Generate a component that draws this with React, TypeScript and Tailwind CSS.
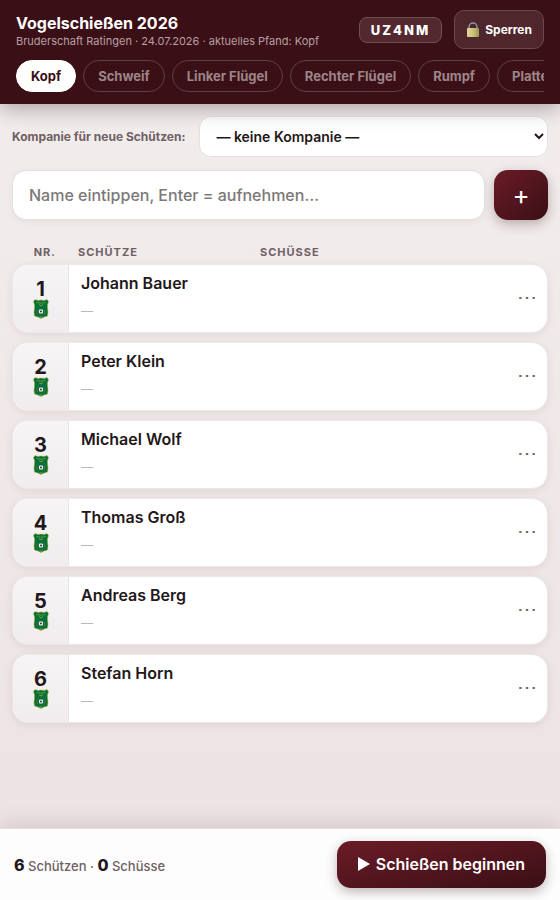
import { useState } from 'react';
import type { FormEvent } from 'react';

interface Shooter {
  id: number;
  name: string;
}

const targets = ['Kopf', 'Schweif', 'Linker Flügel', 'Rechter Flügel', 'Rumpf', 'Platte'];

const initialShooters: Shooter[] = [
  { id: 1, name: 'Johann Bauer' },
  { id: 2, name: 'Peter Klein' },
  { id: 3, name: 'Michael Wolf' },
  { id: 4, name: 'Thomas Groß' },
  { id: 5, name: 'Andreas Berg' },
  { id: 6, name: 'Stefan Horn' },
];

function Crest() {
  return (
    <svg viewBox="0 0 32 40" className="w-4 h-5" aria-hidden="true">
      <path
        d="M4 1 Q10 4 16 2 Q22 4 28 1 L31 5 Q28 11 29 18 Q31 27 29 34 Q22 35 16 39 Q10 35 3 34 Q1 27 3 18 Q4 11 1 5 Z"
        fill="#07703c"
        stroke="#a3ab1f"
        strokeWidth="1"
      />
      <path d="M7 7 Q16 10 25 7" fill="none" stroke="#5f9a2c" strokeWidth="2" />
      <path d="M12 11 L16 14 L20 11" fill="none" stroke="#7fa52a" strokeWidth="2" />
      <path d="M9 21 Q6 26 10 31 M23 21 Q26 26 22 31" fill="none" stroke="#5e6a2c" strokeWidth="2" />
      <rect x="12" y="21" width="8" height="8" rx="2" fill="#f0f3ef" />
      <circle cx="16" cy="25" r="2" fill="#26302b" />
      <path d="M14 35 L16 37 L18 35" fill="none" stroke="#d8c91c" strokeWidth="2" />
    </svg>
  );
}

function LockIcon() {
  return (
    <svg viewBox="0 0 28 32" className="w-[14px] h-4" aria-hidden="true">
      <defs>
        <linearGradient id="lock-body" x1="0" x2="1">
          <stop offset="0" stopColor="#e0da96" />
          <stop offset="0.5" stopColor="#c9c27a" />
          <stop offset="1" stopColor="#9c9455" />
        </linearGradient>
      </defs>
      <path d="M6 16 V10 a8 8 0 0 1 16 0 V16" fill="none" stroke="#8598a5" strokeWidth="3" />
      <rect x="2" y="12" width="24" height="18" rx="2" fill="url(#lock-body)" />
    </svg>
  );
}

function ShooterRow({ shooter, position }: { shooter: Shooter; position: number }) {
  return (
    <tr className="flex overflow-hidden rounded-2xl border border-[#ece8e9] bg-white shadow-[0_2px_8px_rgba(60,15,20,0.08)]">
      <td className="flex w-14 shrink-0 flex-col items-center justify-center border-r border-[#e9e4e5] bg-linear-to-b from-[#f7f4f5] to-[#f1edee]">
        <span className="text-xl leading-5 font-bold">{position}</span>
        <Crest />
      </td>
      <td className="min-w-0 flex-1 px-3 pt-2 pb-3">
        <div className="truncate text-base leading-5 font-semibold">{shooter.name}</div>
        <div className="pt-2 text-xs leading-[19px] text-[#bdb6b8]">—</div>
      </td>
      <td className="flex items-center pr-1">
        <button
          type="button"
          aria-label={`Optionen für ${shooter.name}`}
          className="h-10 w-8 pb-1 text-xl leading-5 text-[#6f5f63]"
        >
          ⋯
        </button>
      </td>
    </tr>
  );
}

export default function App() {
  const [activeTarget, setActiveTarget] = useState('Kopf');
  const [shooters, setShooters] = useState(initialShooters);
  const [name, setName] = useState('');

  const addShooter = (e: FormEvent) => {
    e.preventDefault();
    if (!name.trim()) return;
    setShooters([...shooters, { id: shooters.length + 1, name: name.trim() }]);
    setName('');
  };

  return (
    <div className="flex min-h-screen flex-col bg-linear-to-b from-[#f2eeee] to-[#ede2e3] font-['Inter',sans-serif] text-[#23171a]">
      <header className="relative bg-[#3b0f16] px-4 pt-[10px] pb-3 text-white shadow-[0_4px_20px_rgba(30,10,14,0.35)]">
        <div className="flex items-center gap-3">
          <div className="min-w-0 flex-1 pt-[2px]">
            <h1 className="truncate text-base leading-5 font-bold">Vogelschießen 2026</h1>
            <p className="truncate text-[11px] leading-4 text-[#b89fa3]">
              Bruderschaft Ratingen · 24.07.2026 · aktuelles Pfand: Kopf
            </p>
          </div>
          <span className="rounded-lg border border-[#715055] bg-[#53292f] px-[11px] py-[3px] text-[13px] leading-[18px] font-extrabold tracking-[2px]">
            UZ4NM
          </span>
          <button
            type="button"
            className="flex h-[39px] items-center gap-[5px] rounded-[10px] border border-[#6b494e] bg-[#4e262c] px-[11px] text-xs font-bold"
          >
            <LockIcon />
            Sperren
          </button>
        </div>
        <nav className="mt-[11px] flex gap-[7px] overflow-x-auto [scrollbar-width:none]">
          {targets.map((target) => (
            <button
              key={target}
              type="button"
              onClick={() => setActiveTarget(target)}
              className={`h-8 shrink-0 rounded-full border px-[14px] pt-px text-[13px] font-bold ${
                target === activeTarget
                  ? 'border-white bg-white text-[#3b0f16]'
                  : 'border-[#623f45] text-[#9d8689]'
              }`}
            >
              {target}
            </button>
          ))}
        </nav>
      </header>

      <main className="flex-1 px-3 pt-3 pb-6">
        <div className="flex items-center gap-[14px]">
          <label htmlFor="company" className="text-xs font-bold text-[#6f5f63]">
            Kompanie für neue Schützen:
          </label>
          <select
            id="company"
            className="h-[41px] min-w-0 flex-1 rounded-xl border border-[#e6e0e1] bg-white px-3 text-sm font-semibold"
          >
            <option>— keine Kompanie —</option>
          </select>
        </div>

        <form onSubmit={addShooter} className="mt-[9px] flex gap-[9px] bg-[#f1ecec] pt-1 pb-2">
          <input
            type="text"
            aria-label="Name des Schützen"
            value={name}
            onChange={(e) => setName(e.target.value)}
            placeholder="Name eintippen, Enter = aufnehmen…"
            className="h-[50px] min-w-0 flex-1 rounded-[14px] border border-[#e6e0e1] bg-white px-4 text-base font-medium shadow-[0_2px_6px_rgba(60,15,20,0.06)] placeholder:text-[#7c7879]"
          />
          <button
            type="submit"
            aria-label="Aufnehmen"
            className="h-[50px] w-[54px] rounded-[14px] bg-linear-to-br from-[#6b1c26] to-[#3b0f16] pb-[2px] text-[26px] font-normal text-white shadow-[0_4px_12px_rgba(60,15,20,0.3)]"
          >
            +
          </button>
        </form>

        <table className="mt-[17px] block">
          <thead className="block">
            <tr className="flex text-left text-[11px] leading-[14px] tracking-[1px] text-[#6f5f63] uppercase">
              <th className="w-11 text-right font-bold">Nr.</th>
              <th className="flex-1 pl-[22px] font-bold">Schütze</th>
              <th className="w-72 font-bold">Schüsse</th>
            </tr>
          </thead>
          <tbody className="mt-[5px] flex flex-col gap-[9px]">
            {shooters.map((shooter, i) => (
              <ShooterRow key={shooter.id} shooter={shooter} position={i + 1} />
            ))}
          </tbody>
        </table>
      </main>

      <footer className="sticky bottom-0 flex items-center justify-between border-t border-[#e6e0e1] bg-[#fdfdfd] px-[14px] py-3 shadow-[0_-4px_20px_rgba(30,10,14,0.12)]">
        <p className="text-[13px] font-medium text-[#6f5f63]">
          <strong className="text-base font-extrabold text-[#23171a]">{shooters.length}</strong> Schützen ·{' '}
          <strong className="text-base font-extrabold text-[#23171a]">0</strong> Schüsse
        </p>
        <button
          type="button"
          className="flex h-[47px] items-center gap-[6px] rounded-[14px] bg-linear-to-br from-[#6b1c26] to-[#3b0f16] px-[21px] pb-px text-base font-semibold text-white shadow-[0_4px_12px_rgba(60,15,20,0.3)]"
        >
          <svg viewBox="0 0 12 14" className="h-[14px] w-3" fill="currentColor" aria-hidden="true">
            <path d="M0 0 L12 7 L0 14 Z" />
          </svg>
          Schießen beginnen
        </button>
      </footer>
    </div>
  );
}
